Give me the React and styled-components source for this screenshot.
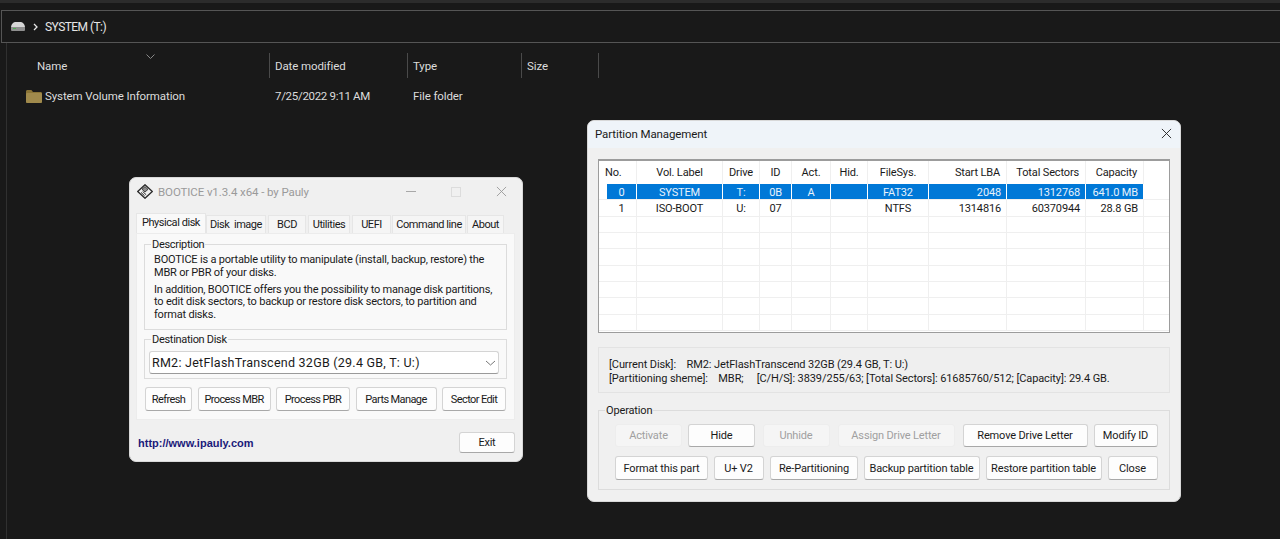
import React from "react";
import styled, { createGlobalStyle } from "styled-components";

const GlobalStyle = createGlobalStyle`
  html, body {
    margin: 0;
    padding: 0;
    background: #191919;
    font-family: Roboto, "Open Sans", sans-serif;
    font-size: 11.5px;
    letter-spacing: -0.1px;
    overflow: hidden;
  }
  * { box-sizing: border-box; }
`;

const Desktop = styled.div`
  position: relative;
  width: 1280px;
  height: 539px;
  background: #191919;
  overflow: hidden;
`;

/* ---------- explorer behind the dialogs ---------- */

const TopStrip = styled.div`
  height: 3px;
  margin-bottom: 7px;
  background: #2c2c2c;
`;

const AddressBar = styled.div`
  display: flex;
  align-items: center;
  height: 33px;
  margin-left: 1px;
  padding-left: 9px;
  border: 1px solid #555;
  border-right: 0;
  color: #e6e6e6;
  font-size: 12px;
  letter-spacing: -0.55px;
`;

const Crumb = styled.svg`
  margin: 0 7px 0 8px;
`;

const FileList = styled.div`
  position: relative;
  height: 496px;
  margin-left: 6px;
  padding-top: 10px;
  border-left: 1px solid #303030;
  color: #dcdcdc;
`;

const SortMark = styled.svg`
  position: absolute;
  left: 139px;
  top: 11px;
`;

const ColumnRow = styled.div`
  display: grid;
  grid-template-columns: 263px 138px 114px 77px;
  height: 25px;
  align-items: center;
`;

const ColumnHead = styled.div`
  height: 100%;
  display: flex;
  align-items: center;
  padding-left: ${(p) => p.$pad || 5}px;
  border-right: 1px solid #4a4a4a;
`;

const FileRow = styled.div`
  display: grid;
  grid-template-columns: 263px 138px 114px;
  align-items: center;
  height: 24px;
  margin-top: 6px;
`;

const FileName = styled.div`
  display: flex;
  align-items: center;
  gap: 3px;
  padding-left: 19px;
`;

const FileCell = styled.div`
  padding-left: 5px;
  letter-spacing: ${(p) => p.$tracking ?? -0.1}px;
`;

/* ---------- dialogs ---------- */

const Dialog = styled.div`
  position: absolute;
  left: ${(p) => p.$x}px;
  top: ${(p) => p.$y}px;
  width: ${(p) => p.$w}px;
  height: ${(p) => p.$h}px;
  display: flex;
  flex-direction: column;
  background: #f0f0f0;
  color: #1a1a1a;
  border-radius: 7px;
  border: 1px solid #d8d8d8;
  overflow: hidden;
  font-size: 11px;
  letter-spacing: ${(p) => p.$tracking}px;
`;

const BootTitle = styled.div`
  display: flex;
  align-items: center;
  height: 27px;
  padding: 0 0 0 7px;
  color: #9a9a9a;
  font-size: 11.5px;
  letter-spacing: -0.1px;
  flex: none;
`;

const TitleText = styled.span`
  margin-left: 5px;
  flex: 1;
`;

const WindowGlyphs = styled.div`
  display: flex;
  align-items: center;
  gap: 35px;
  margin-right: 15px;
`;

const TabRow = styled.div`
  display: flex;
  align-items: flex-end;
  height: 28px;
  margin: 0 6px;
  flex: none;
  letter-spacing: -0.45px;
`;

const Tab = styled.div`
  display: flex;
  align-items: center;
  justify-content: center;
  width: ${(p) => p.$w}px;
  margin-right: ${(p) => p.$gap || 0}px;
  height: ${(p) => (p.$active ? 20 : 18)}px;
  background: ${(p) => (p.$active ? "#f9f9f9" : "#f5f5f5")};
  border: 1px solid #e6e6e6;
  border-bottom: 0;
  white-space: pre;
  padding-bottom: ${(p) => (p.$active ? 2 : 0)}px;
`;

const TabPanel = styled.div`
  height: 187px;
  margin: 0 7px 0 6px;
  padding: 10px 7px 0 7px;
  background: #f9f9f9;
  border: 1px solid #ececec;
  flex: none;
`;

const Group = styled.div`
  position: relative;
  margin-top: ${(p) => p.$top || 0}px;
  padding: ${(p) => p.$pad};
  height: ${(p) => p.$h}px;
  border: 1px solid #dcdcdc;
`;

const GroupLabel = styled.span`
  position: absolute;
  left: 6px;
  top: -6px;
  padding: 0 1px;
  line-height: 12px;
  background: ${(p) => p.$bg};
`;

const Para = styled.p`
  margin: 0 0 ${(p) => p.$after || 0}px;
  line-height: 12.5px;
  white-space: nowrap;
  letter-spacing: -0.2px;
`;

const Combo = styled.div`
  display: flex;
  align-items: center;
  justify-content: space-between;
  height: 23px;
  padding: 0 2px 0 2px;
  background: #fff;
  border: 1px solid #d4d4d4;
  border-bottom-color: #9a9a9a;
  border-radius: 3px;
  font-size: 12.5px;
  letter-spacing: 0.25px;
`;

const BootButtons = styled.div`
  display: flex;
  gap: 5.5px;
  margin: 8px 0 0 1px;
  letter-spacing: -0.6px;
`;

const Button = styled.div`
  display: flex;
  align-items: center;
  justify-content: center;
  flex: none;
  width: ${(p) => p.$w}px;
  height: ${(p) => p.$h || 24}px;
  margin-left: ${(p) => p.$left || 0}px;
  background: ${(p) => (p.$off ? "#f5f5f5" : "#fdfdfd")};
  color: ${(p) => (p.$off ? "#a0a0a0" : "#1a1a1a")};
  border: 1px solid ${(p) => (p.$off ? "#ededed" : "#d4d4d4")};
  border-bottom-color: ${(p) => (p.$off ? "#ededed" : "#a8a8a8")};
  border-radius: 3px;
  white-space: nowrap;
`;

const BootFooter = styled.div`
  display: flex;
  align-items: center;
  justify-content: space-between;
  margin: 12px 7px 0 8px;
`;

const SiteLink = styled.span`
  font-family: "Liberation Sans", Arial, sans-serif;
  font-size: 11px;
  font-weight: 700;
  letter-spacing: 0;
  color: #1a1a7a;
`;

const PartTitle = styled.div`
  display: flex;
  align-items: center;
  justify-content: space-between;
  height: 27px;
  padding: 0 8px 2px 7px;
  background: #eff4f9;
  font-size: 11.5px;
  letter-spacing: -0.1px;
  flex: none;
`;

const PartBody = styled.div`
  padding: 11px 10px 0;
`;

const TableBox = styled.div`
  height: 174px;
  background: #fff;
  border: 1px solid #9c9c9c;
  border-top-width: 2px;
  overflow: hidden;
`;

const HEAD_COLUMNS = "38px 86px 37px 32px 39px 37px 61px 78px 79px 58px 1fr";
const ROW_COLUMNS = `8px 30px ${HEAD_COLUMNS.slice(5)}`;

const HeadRow = styled.div`
  display: grid;
  grid-template-columns: ${HEAD_COLUMNS};
  height: 23px;
`;

const HeadCell = styled.div`
  display: flex;
  align-items: center;
  justify-content: ${(p) => p.$align || "center"};
  padding: 0 6px;
  border-right: 1px solid #efefef;
  white-space: nowrap;
`;

const DataRow = styled.div`
  display: grid;
  grid-template-columns: ${ROW_COLUMNS};
  height: 16.35px;
  border-bottom: 1px solid #efefef;
`;

const DataCell = styled.div`
  display: flex;
  align-items: center;
  justify-content: ${(p) => p.$align || "center"};
  padding: 1px 5px 0;
  background: ${(p) => (p.$selected ? "#0078d7" : "transparent")};
  color: ${(p) => (p.$selected ? "#e8f2fb" : "#1a1a1a")};
  border-right: 1px solid ${(p) => (p.$selected ? "#fff" : "#efefef")};
  white-space: nowrap;
`;

const Gutter = styled.div`
  background: #fff;
`;

const InfoBox = styled.div`
  height: 46px;
  margin-top: 14px;
  padding: 10px 10px 0;
  background: #efefef;
  border: 1px solid #e3e3e3;
  line-height: 14px;
  white-space: pre;
  letter-spacing: -0.1px;
`;

const OpRow = styled.div`
  display: flex;
  margin-top: ${(p) => p.$top || 0}px;
`;

/* ---------- small drawings ---------- */

const DriveIcon = () => (
  <svg width="14" height="9" viewBox="0 0 14 9">
    <path d="M0 5.5C0 2 2.5 0 5 0h4c2.5 0 5 2 5 5.5z" fill="#d6d6d6" />
    <rect x="0" y="5" width="14" height="4" rx="1" fill="#8f8f8f" />
    <rect x="2" y="6" width="3" height="1" fill="#4caf50" />
  </svg>
);

const FolderIcon = () => (
  <svg width="16" height="13" viewBox="0 0 16 13">
    <path d="M0 1.5C0 .7.6 0 1.4 0h4l1.6 2h7.6c.8 0 1.4.6 1.4 1.4v8.2c0 .8-.6 1.4-1.4 1.4H1.4C.6 13 0 12.4 0 11.6z" fill="#8a7436" />
    <rect y="3" width="16" height="10" rx="1.2" fill="#a08a4c" />
  </svg>
);

const DiskLogo = () => (
  <svg width="16" height="15" viewBox="0 0 16 15">
    <path d="M8 .7l7.3 6.8L8 14.3.7 7.5z" fill="#efefef" stroke="#2a2a2a" strokeWidth="1.3" strokeLinejoin="round" />
    <path d="M5 5.2l3-2.6 3 2.8-3 2.6z" fill="#8c8c8c" stroke="#2a2a2a" strokeWidth=".8" />
    <path d="M4 8.4l3.6 3.4M5.6 7.4l3.6 3.4" stroke="#2a2a2a" strokeWidth="1" />
  </svg>
);

const CloseGlyph = ({ color, size }) => (
  <svg width={size} height={size} viewBox="0 0 12 12">
    <path d="M1 1l10 10M11 1L1 11" stroke={color} strokeWidth="1" fill="none" />
  </svg>
);

const Chevron = () => (
  <svg width="11" height="6" viewBox="0 0 11 6">
    <path d="M1 1l4.5 4L10 1" stroke="#777" fill="none" />
  </svg>
);

const tabs = [
  { label: "Physical disk", w: 70, active: true },
  { label: "Disk  image", w: 60, gap: 2 },
  { label: "BCD", w: 38, gap: 2 },
  { label: "Utilities", w: 42, gap: 2 },
  { label: "UEFI", w: 39, gap: 1 },
  { label: "Command line", w: 74, gap: 1 },
  { label: "About", w: 37 },
];

const bootButtons = [
  ["Refresh", 47],
  ["Process MBR", 73],
  ["Process PBR", 74],
  ["Parts Manage", 81],
  ["Sector Edit", 64],
];

const heads = [
  ["No.", "flex-start"],
  ["Vol. Label"],
  ["Drive"],
  ["ID"],
  ["Act."],
  ["Hid."],
  ["FileSys."],
  ["Start LBA", "flex-end"],
  ["Total Sectors", "flex-end"],
  ["Capacity", "flex-end"],
];

const rows = [
  ["0", "SYSTEM", "T:", "0B", "A", "", "FAT32", "2048", "1312768", "641.0 MB"],
  ["1", "ISO-BOOT", "U:", "07", "", "", "NTFS", "1314816", "60370944", "28.8 GB"],
  ...Array.from({ length: 7 }, () => Array(10).fill("")),
];

// label, width, gap before it, disabled
const opRowOne = [
  ["Activate", 67, 0, true],
  ["Hide", 67, 6],
  ["Unhide", 67, 7.5, true],
  ["Assign Drive Letter", 117, 8, true],
  ["Remove Drive Letter", 125, 8],
  ["Modify ID", 64, 6],
];

const opRowTwo = [
  ["Format this part", 93, 0],
  ["U+ V2", 50, 5.5],
  ["Re-Partitioning", 88, 6.5],
  ["Backup partition table", 116, 5.5],
  ["Restore partition table", 116, 6],
  ["Close", 50, 6],
];

export default function App() {
  return (
    <Desktop>
      <GlobalStyle />
      <TopStrip />
      <AddressBar>
        <DriveIcon />
        <Crumb width="5" height="8" viewBox="0 0 5 8">
          <path d="M1 1l3 3-3 3" stroke="#e6e6e6" strokeWidth="1.3" fill="none" />
        </Crumb>
        SYSTEM (T:)
      </AddressBar>
      <FileList>
        <SortMark width="9" height="5" viewBox="0 0 9 5">
          <path d="M.5.5l4 4 4-4" stroke="#888" fill="none" />
        </SortMark>
        <ColumnRow>
          <ColumnHead $pad={30}>Name</ColumnHead>
          <ColumnHead>Date modified</ColumnHead>
          <ColumnHead>Type</ColumnHead>
          <ColumnHead>Size</ColumnHead>
        </ColumnRow>
        <FileRow>
          <FileName>
            <FolderIcon />
            System Volume Information
          </FileName>
          <FileCell $tracking={-0.3}>7/25/2022 9:11 AM</FileCell>
          <FileCell>File folder</FileCell>
        </FileRow>
      </FileList>

      <Dialog $x={129} $y={177} $w={394} $h={285} $tracking={-0.3}>
        <BootTitle>
          <DiskLogo />
          <TitleText>BOOTICE v1.3.4 x64 - by Pauly</TitleText>
          <WindowGlyphs>
            <svg width="10" height="2"><rect width="10" height="1" fill="#a8a8a8" /></svg>
            <svg width="10" height="10"><rect x=".5" y=".5" width="9" height="9" fill="none" stroke="#dcdcdc" /></svg>
            <CloseGlyph color="#9a9a9a" size={11} />
          </WindowGlyphs>
        </BootTitle>
        <TabRow>
          {tabs.map((tab) => (
            <Tab key={tab.label} $w={tab.w} $gap={tab.gap} $active={tab.active}>
              {tab.label}
            </Tab>
          ))}
        </TabRow>
        <TabPanel>
          <Group $h={86} $pad="9px 6px 0 9px">
            <GroupLabel $bg="#f9f9f9">Description</GroupLabel>
            <Para $after={4.5}>
              BOOTICE is a portable utility to manipulate (install, backup, restore) the
              <br />
              MBR or PBR of your disks.
            </Para>
            <Para>
              In addition, BOOTICE offers you the possibility to manage disk partitions,
              <br />
              to edit disk sectors, to backup or restore disk sectors, to partition and
              <br />
              format disks.
            </Para>
          </Group>
          <Group $h={40} $top={9} $pad="11px 7px 0 4px">
            <GroupLabel $bg="#f9f9f9">Destination Disk</GroupLabel>
            <Combo>
              RM2: JetFlashTranscend 32GB (29.4 GB, T: U:)
              <Chevron />
            </Combo>
          </Group>
          <BootButtons>
            {bootButtons.map(([label, w]) => (
              <Button key={label} $w={w}>{label}</Button>
            ))}
          </BootButtons>
        </TabPanel>
        <BootFooter>
          <SiteLink>http://www.ipauly.com</SiteLink>
          <Button $w={56} $h={21}>Exit</Button>
        </BootFooter>
      </Dialog>

      <Dialog $x={587} $y={120} $w={594} $h={382} $tracking={-0.15}>
        <PartTitle>
          Partition Management
          <CloseGlyph color="#222" size={11} />
        </PartTitle>
        <PartBody>
          <TableBox>
            <HeadRow>
              {heads.map(([label, align]) => (
                <HeadCell key={label} $align={align}>{label}</HeadCell>
              ))}
              <Gutter />
            </HeadRow>
            {rows.map((row, r) => (
              <DataRow key={r}>
                <Gutter />
                {row.map((value, c) => (
                  <DataCell key={c} $selected={r === 0} $align={c === 0 ? "center" : heads[c][1]}>
                    {value}
                  </DataCell>
                ))}
                <Gutter />
              </DataRow>
            ))}
          </TableBox>
          <InfoBox>
            {"[Current Disk]:    RM2: JetFlashTranscend 32GB (29.4 GB, T: U:)\n[Partitioning sheme]:    MBR;     [C/H/S]: 3839/255/63; [Total Sectors]: 61685760/512; [Capacity]: 29.4 GB."}
          </InfoBox>
          <Group $h={80} $top={17} $pad="13px 12px 0 16px">
            <GroupLabel $bg="#f0f0f0">Operation</GroupLabel>
            <OpRow>
              {opRowOne.map(([label, w, left, off]) => (
                <Button key={label} $w={w} $left={left} $off={off} $h={23}>{label}</Button>
              ))}
            </OpRow>
            <OpRow $top={9}>
              {opRowTwo.map(([label, w, left]) => (
                <Button key={label} $w={w} $left={left}>{label}</Button>
              ))}
            </OpRow>
          </Group>
        </PartBody>
      </Dialog>
    </Desktop>
  );
}
